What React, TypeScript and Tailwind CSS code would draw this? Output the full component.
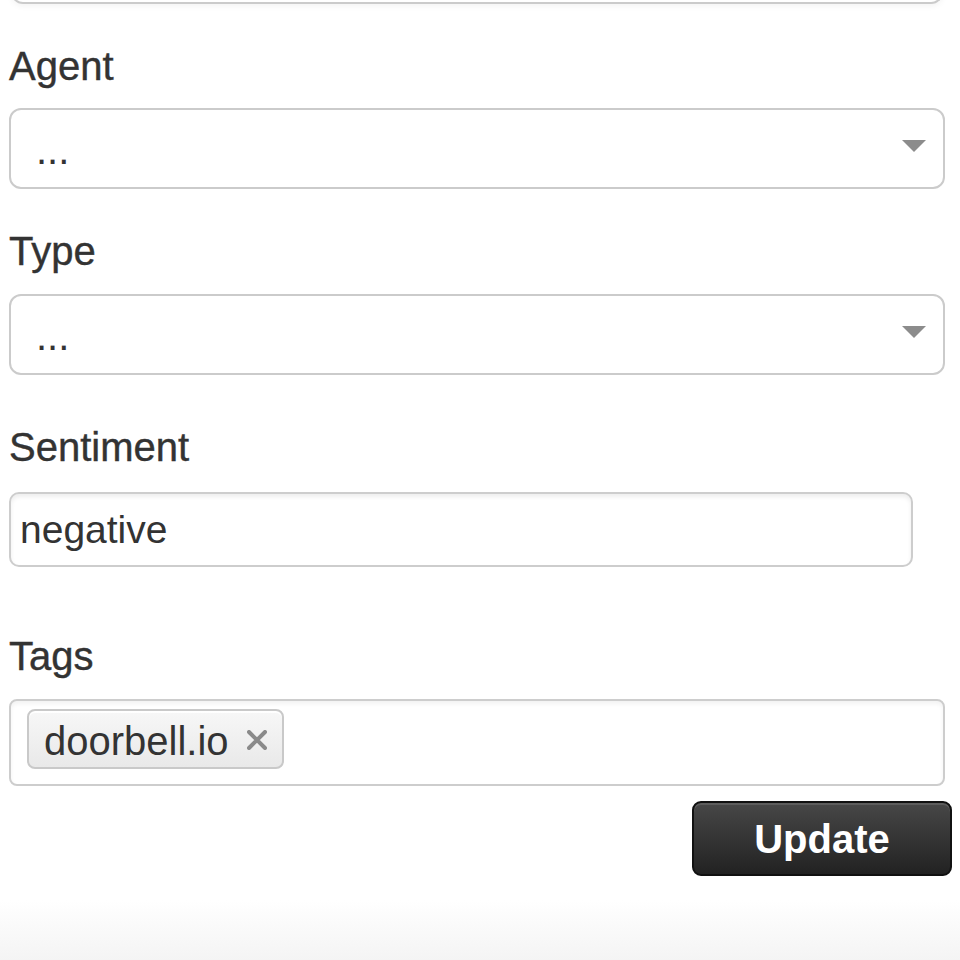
import React from 'react';

const font = "font-['Liberation_Sans','Helvetica_Neue',Arial,sans-serif]";

const Label = ({ children, className = '' }: { children: React.ReactNode; className?: string }) => (
  <div className={`text-[40px] leading-[48px] text-[#333] [-webkit-text-stroke:0.4px_#333] ${className}`}>{children}</div>
);

const SelectBox = ({ value }: { value: string }) => (
  <div className="relative h-[81px] rounded-[12px] border-2 border-[#cbcbcb] bg-white pl-[25px] pt-[20px] text-[40px] leading-[40px] text-[#333]">
    {value}
    <svg className="absolute right-[17px] top-[30px]" width="24" height="12" viewBox="0 0 24 12">
      <path d="M0 0 L24 0 L12 12 Z" fill="#8c8c8c" />
    </svg>
  </div>
);

export default function App() {
  return (
    <div className={`h-[960px] overflow-hidden bg-[linear-gradient(to_bottom,#ffffff_900px,#f4f4f4_960px)] pl-[9px] pr-[15px] ${font}`}>
      {/* previous field, cut off at the top */}
      <div className="mx-[2px] -mt-[60px] h-[64px] rounded-b-[12px] border-2 border-t-0 border-[#cbcbcb] bg-white shadow-[0_2px_6px_rgba(0,0,0,0.05)]" />

      <Label className="mt-[38px]">Agent</Label>
      <div className="mt-[18px]">
        <SelectBox value="..." />
      </div>

      <Label className="mt-[38px]">Type</Label>
      <div className="mt-[19px]">
        <SelectBox value="..." />
      </div>

      <Label className="mt-[48px]">Sentiment</Label>
      <div className="mt-[21px] h-[75px] w-[904px] rounded-[10px] border-2 border-[#cdcdcd] bg-white pl-[9px] pt-[16px] text-[39px] leading-[40px] text-[#333] shadow-[inset_0_3px_4px_rgba(0,0,0,0.07)]">
        negative
      </div>

      <Label className="mt-[65px]">Tags</Label>
      <div className="mt-[19px] h-[87px] rounded-[8px] border-2 border-[#cdcdcd] bg-white pl-[16px] pt-[8px] shadow-[inset_0_3px_4px_rgba(0,0,0,0.05)]">
        <div className="flex h-[60px] w-[257px] items-start rounded-[8px] border-2 border-[#c9c9c9] bg-[linear-gradient(to_bottom,#f7f7f7,#e9e9e9)] pl-[15px] pt-[10px] shadow-[inset_0_2px_0_rgba(255,255,255,0.9)]">
          <span className="text-[40px] leading-[40px] text-[#333]">doorbell.io</span>
          <svg className="ml-[18px] mt-[9px]" width="20" height="20" viewBox="0 0 20 20">
            <path d="M2 2 L18 18 M18 2 L2 18" stroke="#8a8a8a" strokeWidth="4" strokeLinecap="round" />
          </svg>
        </div>
      </div>

      <div className="-mr-[7px] mt-[15px] flex justify-end">
        <button className="h-[75px] w-[260px] rounded-[9px] border-2 border-[#111] bg-[linear-gradient(to_bottom,#474747,#222222)] text-[40px] font-bold leading-[40px] text-white shadow-[inset_0_2px_0_rgba(255,255,255,0.12)]">
          Update
        </button>
      </div>
    </div>
  );
}
